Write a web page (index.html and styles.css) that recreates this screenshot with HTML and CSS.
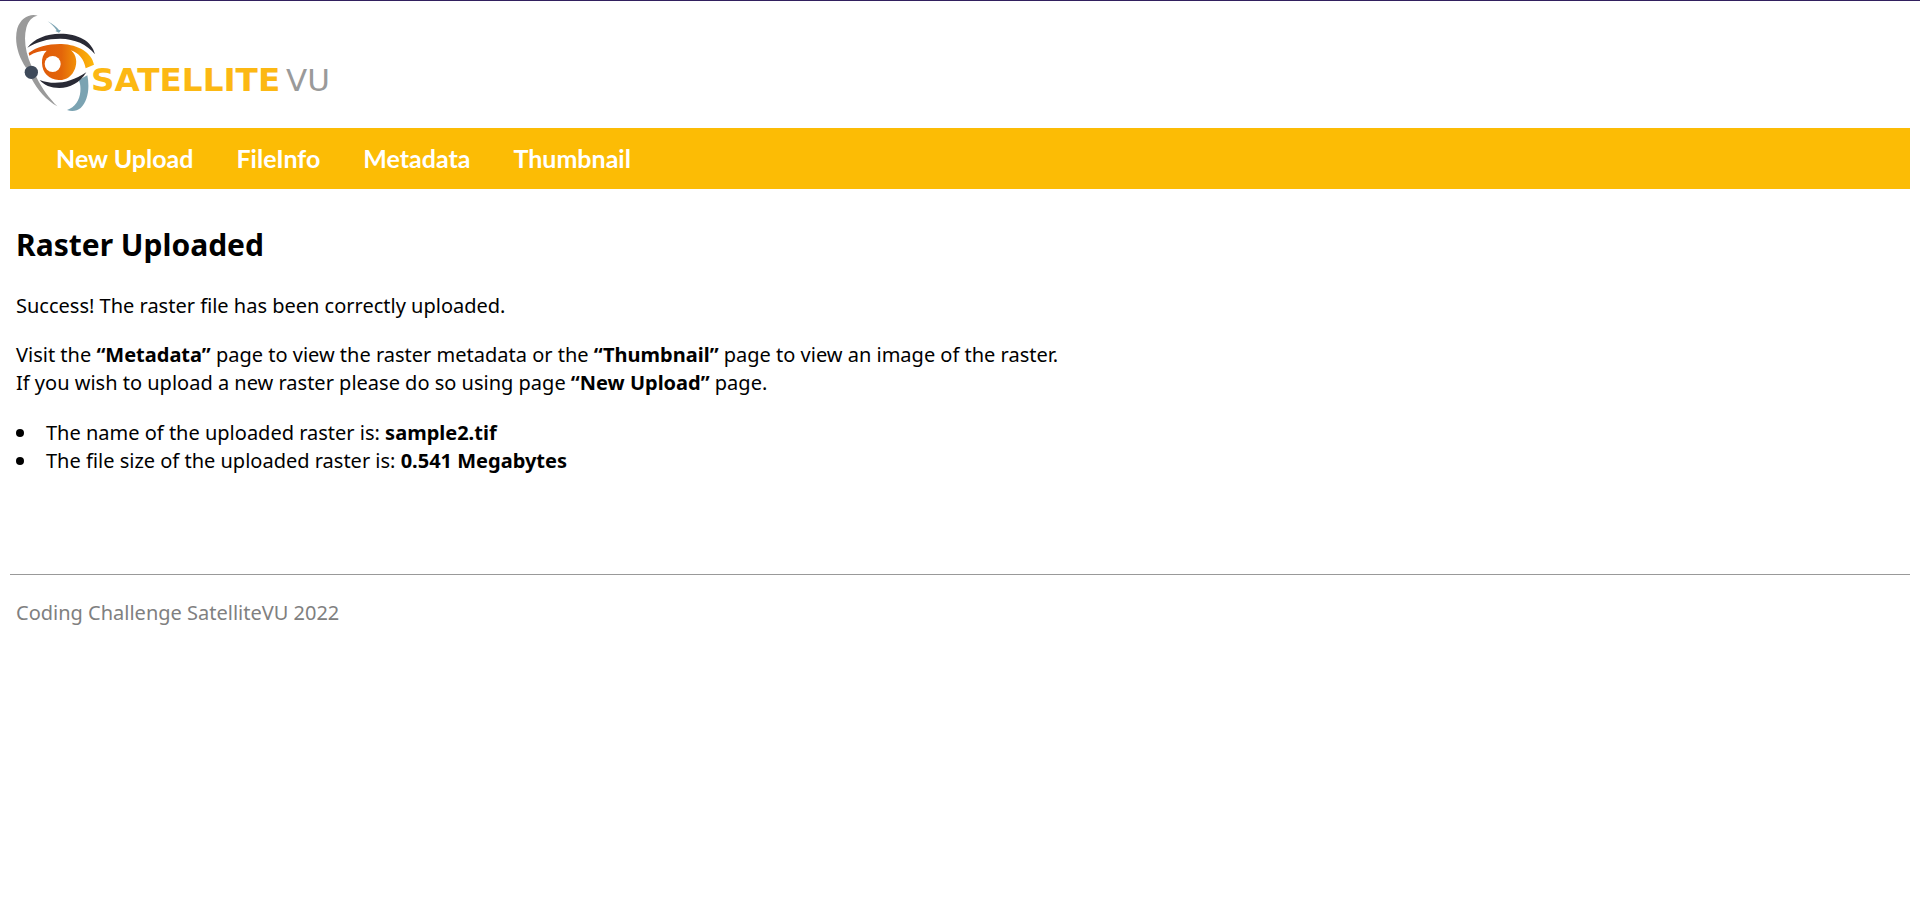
FILE: index.html
```html
<!DOCTYPE html>
<html lang="en">
<head>
<meta charset="utf-8">
<title>Raster Uploaded</title>
<link rel="stylesheet" href="styles.css">
</head>
<body>
<header class="header">
  <svg class="logo" viewBox="48 45 942 288" role="img" aria-label="SatelliteVU">
    <defs>
      <linearGradient id="iris" x1="86" y1="0" x2="282" y2="0" gradientUnits="userSpaceOnUse">
        <stop offset="0" stop-color="#dd5508"/>
        <stop offset="0.5" stop-color="#e3650a"/>
        <stop offset="0.78" stop-color="#f59a08"/>
        <stop offset="1" stop-color="#fdb80a"/>
      </linearGradient>
    </defs>
    <path fill="#9a9a9a" d="M113 47C88 40 62 55 52 85C42 122 53 166 78 203L94 197C77 160 70 118 79 83C85 62 96 50 113 47Z"/>
    <path fill="#9a9a9a" d="M94 235L109 231C126 266 147 294 172 319C140 302 112 270 94 235Z"/>
    <path fill="#7ba3b2" d="M143 64C158 72 170 81 177 90L183 91L177 98L166 93L170 91C163 81 154 72 143 64Z"/>
    <path fill="#7ba3b2" d="M236 240L262 226C270 265 263 304 242 324C230 334 215 335 201 330C225 321 239 300 241 275C242 260 241 250 236 240Z"/>
    <path fill="#292a35" d="M82 143C103 116 138 101 181 101C232 101 276 122 285 163C260 132 225 117 181 116C141 116 109 126 82 143Z"/>
    <path fill="#292a35" d="M119 240C158 255 207 252 259 217C239 249 210 264 178 264C153 264 131 255 119 240Z"/>
    <path fill="url(#iris)" d="M86 159C110 140 147 131 185 132C235 134 275 158 282 194L257 205C252 177 237 160 213 151C230 166 232 187 225 206C216 229 198 241 176 240C147 239 127 219 126 190C125 174 130 161 140 152C121 152 103 157 88 167Z"/>
    <circle fill="#fff" cx="158" cy="192" r="24"/>
    <circle fill="#3f4a5a" cx="94" cy="217" r="20"/>
    <text class="logo-bold" x="273" y="272">SATELLITE</text>
    <text class="logo-light" x="858" y="272">VU</text>
  </svg>
</header>
<nav class="nav">
  <a href="#">New Upload</a>
  <a href="#">FileInfo</a>
  <a href="#">Metadata</a>
  <a href="#">Thumbnail</a>
</nav>
<main class="content">
  <h1>Raster Uploaded</h1>
  <p>Success! The raster file has been correctly uploaded.</p>
  <p>Visit the <b>“Metadata”</b> page to view the raster metadata or the <b>“Thumbnail”</b> page to view an image of the raster.<br>If you wish to upload a new raster please do so using page <b>“New Upload”</b> page.</p>
  <ul class="facts">
    <li><span>The name of the uploaded raster is: <b>sample2.tif</b></span></li>
    <li><span>The file size of the uploaded raster is: <b>0.541 Megabytes</b></span></li>
  </ul>
</main>
<footer class="footer">Coding Challenge SatelliteVU 2022</footer>
</body>
</html>
```
FILE: styles.css
```css
body {
  margin: 0;
  padding: 0 10px;
  border-top: 1px solid #32205f;
  background: #fff;
  color: #000;
  font-family: "Segoe UI", "Noto Sans", sans-serif;
  font-size: 20px;
  line-height: 28px;
}

.header {
  padding: 14px 6px 17px;
}

.logo {
  display: block;
  width: 314px;
  height: 96px;
}

.logo-bold {
  fill: #fcb813;
  font: bold 98px "DejaVu Sans", sans-serif;
}

.logo-light {
  fill: #9a9a9a;
  font: 93px "DejaVu Sans", sans-serif;
}

.nav {
  display: flex;
  gap: 43px;
  padding: 15px 46px 16px;
  background: #fcbc05;
  font-family: Lato, sans-serif;
  font-size: 25px;
  font-weight: 700;
  line-height: 30px;
}

.nav a {
  color: #fff;
  text-decoration: none;
}

.content {
  padding: 34px 6px 99px;
}

h1 {
  margin: 0 0 25px;
  font-size: 30px;
  line-height: 44px;
}

p {
  margin: 0 0 21px;
}

.facts {
  margin: 0;
  padding: 1px 0 0;
  list-style: none;
}

.facts li {
  display: flex;
  align-items: center;
  gap: 22px;
}

.facts li::before {
  content: "";
  width: 8px;
  height: 8px;
  border-radius: 50%;
  background: #000;
}

.footer {
  padding: 24px 6px;
  border-top: 1px solid #999;
  color: #808080;
}
```
